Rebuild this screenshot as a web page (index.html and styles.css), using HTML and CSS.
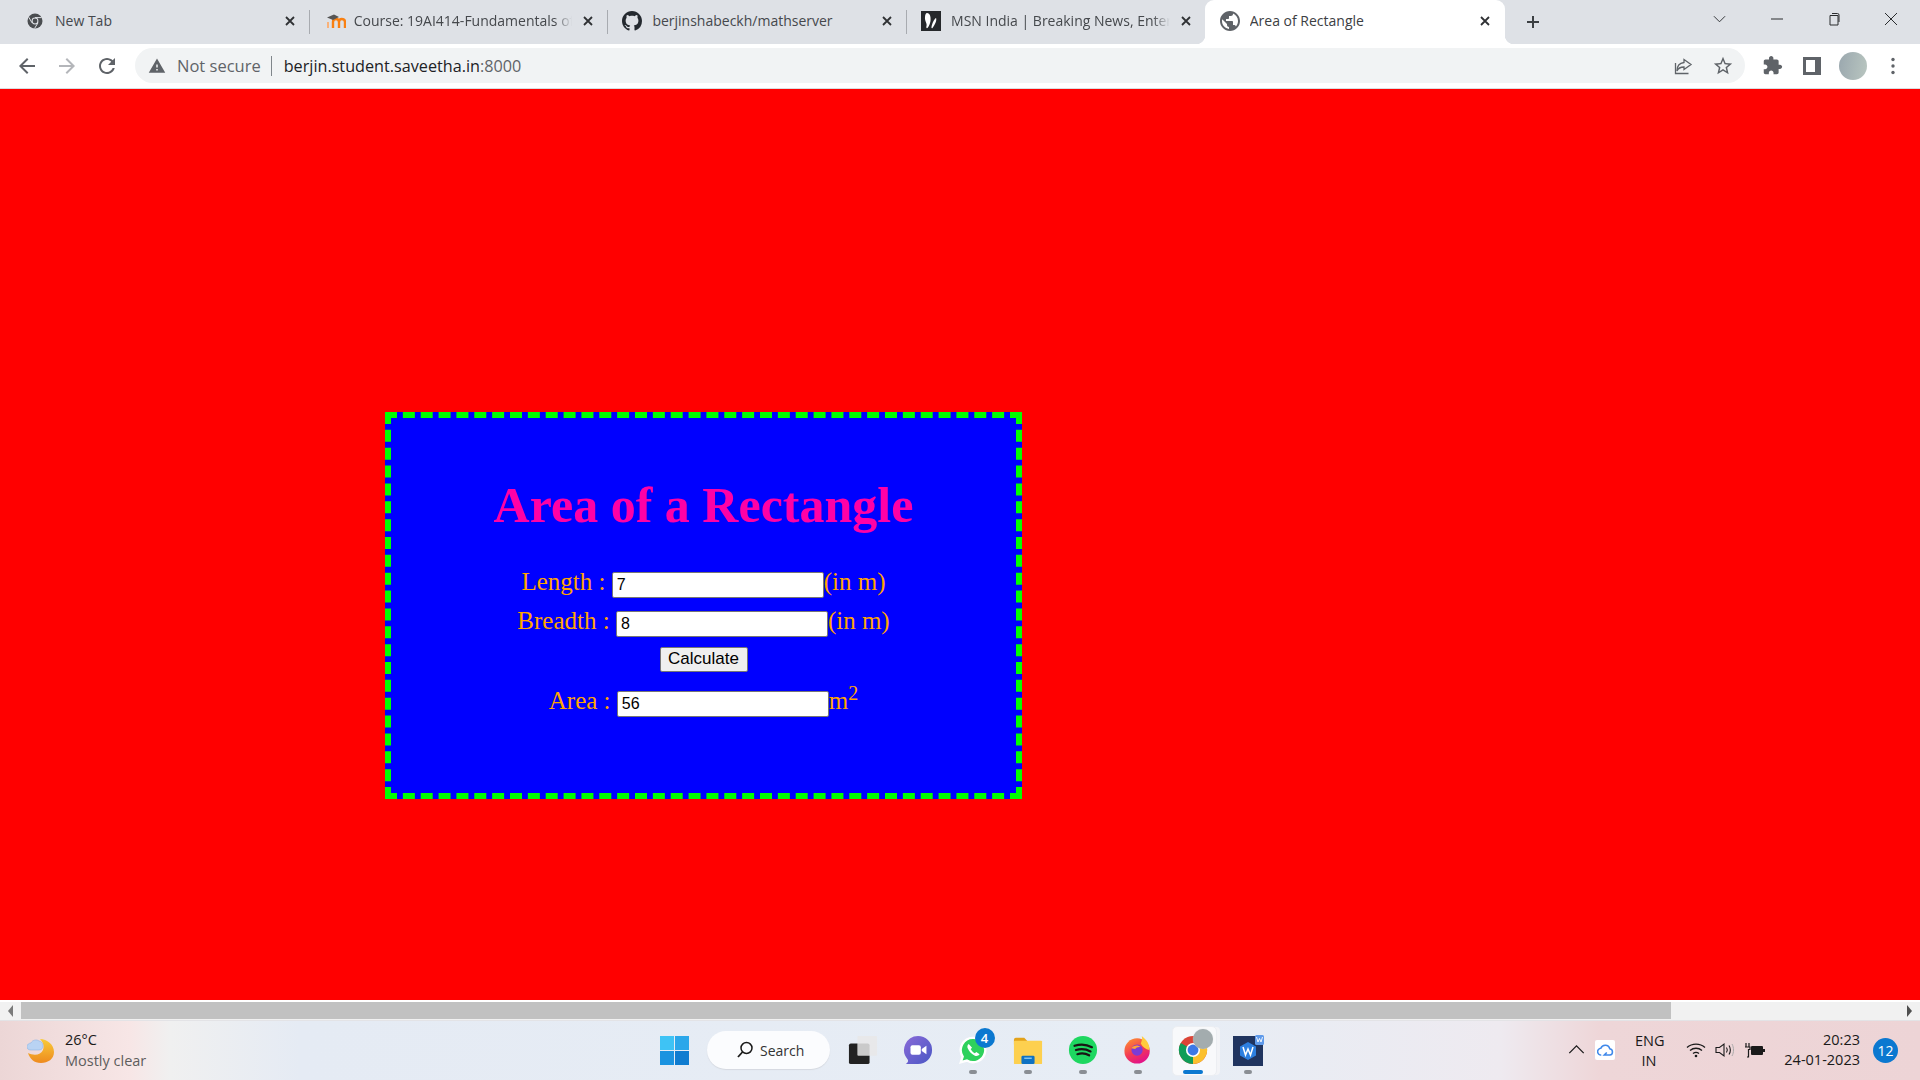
FILE: index.html
```html
<!DOCTYPE html>
<html lang="en">
<head>
<meta charset="utf-8">
<title>Area of Rectangle</title>
<link rel="stylesheet" href="styles.css">
</head>
<body>
<div class="screen">
  <header class="tabstrip">
    <div class="tab">
      <svg class="fav" viewBox="0 0 16 16"><circle cx="8" cy="8" r="7.5" fill="#4a4d50"/><circle cx="8" cy="8" r="3.4" fill="#dee1e6"/><circle cx="8" cy="8" r="2.4" fill="#4a4d50"/><path d="M8 4.6h6.6M5 9.8 1.8 4.2M11 9.8 7.6 15.4" stroke="#dee1e6" stroke-width="1"/></svg>
      <span class="tab-title">New Tab</span>
      <svg class="tab-x" viewBox="0 0 12 12"><path d="M2 2l8 8M10 2l-8 8"/></svg>
    </div>
    <div class="tab sep">
      <svg class="fav wide" viewBox="0 0 20 16"><path d="M7 15V9c0-2 1.500-3 3-3s3 1 3 3v6M13 9c0-2 1.200-3 2.800-3S19 7 19 9v6" fill="none" stroke="#f98012" stroke-width="2.400"/><path d="M2 9v6" stroke="#f9b27a" stroke-width="2"/><path d="M1 4.500 8 1.500 13 4 7 7z" fill="#555"/></svg>
      <span class="tab-title fade">Course: 19AI414-Fundamentals of Data Science</span>
      <svg class="tab-x" viewBox="0 0 12 12"><path d="M2 2l8 8M10 2l-8 8"/></svg>
    </div>
    <div class="tab sep">
      <svg class="fav big" viewBox="0 0 16 16"><path fill="#24292f" d="M8 0C3.58 0 0 3.58 0 8c0 3.54 2.29 6.53 5.47 7.59.4.07.55-.17.55-.38 0-.19-.01-.82-.01-1.49-2.01.37-2.53-.49-2.69-.94-.09-.23-.48-.94-.82-1.13-.28-.15-.68-.52-.01-.53.63-.01 1.08.58 1.23.82.72 1.21 1.87.87 2.33.66.07-.52.28-.87.51-1.07-1.78-.2-3.64-.89-3.64-3.95 0-.87.31-1.59.82-2.15-.08-.2-.36-1.02.08-2.12 0 0 .67-.21 2.2.82.64-.18 1.32-.27 2-.27.68 0 1.36.09 2 .27 1.53-1.04 2.2-.82 2.2-.82.44 1.1.16 1.92.08 2.12.51.56.82 1.27.82 2.15 0 3.07-1.87 3.75-3.65 3.95.29.25.54.73.54 1.48 0 1.07-.01 1.93-.01 2.2 0 .21.15.46.55.38A8.013 8.013 0 0016 8c0-4.42-3.58-8-8-8z"/></svg>
      <span class="tab-title">berjinshabeckh/mathserver</span>
      <svg class="tab-x" viewBox="0 0 12 12"><path d="M2 2l8 8M10 2l-8 8"/></svg>
    </div>
    <div class="tab sep">
      <svg class="fav big" viewBox="0 0 20 20"><rect width="20" height="20" fill="#26282b"/><path d="M6 2c3 0 4 4 3.500 8-.3 2.500-1.500 5-3 7-1 .5-1.500-.5-1-2 .8-2.500-2-5-1.500-9C4.200 3.500 5 2 6 2zM15 7c1 2-.5 6-3.500 10-.8.5-1.200 0-1-1 .5-3 2.500-8 4.500-9z" fill="#fff"/></svg>
      <span class="tab-title fade">MSN India | Breaking News, Entertainment</span>
      <svg class="tab-x" viewBox="0 0 12 12"><path d="M2 2l8 8M10 2l-8 8"/></svg>
    </div>
    <div class="tab tab-active">
      <svg class="fav big" viewBox="2 2 20 20"><path fill="#5f6368" d="M12 2C6.480 2 2 6.480 2 12s4.480 10 10 10 10-4.480 10-10S17.520 2 12 2zm-1 17.930c-3.950-.49-7-3.850-7-7.930 0-.62.080-1.210.210-1.790L9 15v1c0 1.100.9 2 2 2v1.930zm6.900-2.540c-.26-.81-1-1.390-1.900-1.390h-1v-3c0-.55-.45-1-1-1H8v-2h2c.55 0 1-.45 1-1V7h2c1.100 0 2-.9 2-2v-.41c2.930 1.190 5 4.060 5 7.410 0 2.080-.8 3.970-2.100 5.390z"/></svg>
      <span class="tab-title">Area of Rectangle</span>
      <svg class="tab-x" viewBox="0 0 12 12"><path d="M2 2l8 8M10 2l-8 8"/></svg>
    </div>
    <svg class="newtab" viewBox="0 0 16 16"><path d="M8 2v12M2 8h12"/></svg>
    <div class="winctl">
      <svg class="chev" viewBox="0 0 14 8"><path d="M1 1l6 6 6-6"/></svg>
      <svg class="wc" viewBox="0 0 14 14"><path d="M1 7h12"/></svg>
      <svg class="wc" viewBox="0 0 14 14"><path d="M3 3.500h8v9.500H3zM5 1.500h5.500a1.500 1.500 0 0 1 1.500 1.500v7"/></svg>
      <svg class="wc" viewBox="0 0 14 14"><path d="M1 1l12 12M13 1L1 13"/></svg>
    </div>
  </header>

  <nav class="toolbar">
    <svg class="tb first" viewBox="0 0 24 24"><path d="M20 11H7.830l5.590-5.590L12 4l-8 8 8 8 1.410-1.410L7.830 13H20v-2z"/></svg>
    <svg class="tb dim" viewBox="0 0 24 24"><path d="M4 11h12.170l-5.590-5.590L12 4l8 8-8 8-1.410-1.410L16.170 13H4v-2z"/></svg>
    <svg class="tb" viewBox="0 0 24 24"><path d="M17.650 6.350C16.200 4.900 14.210 4 12 4c-4.420 0-7.990 3.580-7.990 8s3.570 8 7.990 8c3.730 0 6.840-2.550 7.730-6h-2.080c-.82 2.330-3.040 4-5.650 4-3.310 0-6-2.690-6-6s2.690-6 6-6c1.660 0 3.140.69 4.220 1.780L13 11h7V4l-2.350 2.350z"/></svg>
    <div class="omnibox">
      <svg class="warn" viewBox="0 0 24 24"><path d="M1 21h22L12 2 1 21zm12-3h-2v-2h2v2zm0-4h-2v-4h2v4z"/></svg>
      <span class="insecure">Not secure</span>
      <span class="omni-sep"></span>
      <span class="url">berjin.student.saveetha.in<span class="port">:8000</span></span>
      <span class="spacer"></span>
      <svg class="omni-ic" viewBox="0 0 20 20"><path d="M11 3.500 18 8.500l-7 5V11C7 11 5 12.500 4 15c0-4.500 2.500-8 7-8.500zM2.500 7v10.500h13" fill="none" stroke="#5f6368" stroke-width="1.300"/></svg>
      <svg class="omni-ic star" viewBox="0 0 24 24"><path d="M22 9.240l-7.190-.62L12 2 9.190 8.630 2 9.240l5.460 4.730L5.820 21 12 17.270 18.180 21l-1.630-7.030L22 9.240zM12 15.400l-3.760 2.270 1-4.280-3.320-2.880 4.380-.38L12 6.100l1.710 4.040 4.380.38-3.320 2.880 1 4.280L12 15.400z"/></svg>
    </div>
    <svg class="act ext" viewBox="0 0 24 24"><path d="M20.500 11H19V7c0-1.100-.9-2-2-2h-4V3.500C13 2.120 11.880 1 10.500 1S8 2.120 8 3.500V5H4c-1.100 0-1.990.9-1.990 2v3.800H3.500c1.490 0 2.700 1.210 2.700 2.700s-1.210 2.700-2.700 2.700H2V20c0 1.100.9 2 2 2h3.800v-1.500c0-1.490 1.210-2.700 2.700-2.700 1.490 0 2.700 1.210 2.700 2.700V22H17c1.100 0 2-.9 2-2v-4h1.500c1.380 0 2.500-1.120 2.500-2.500S21.880 11 20.500 11z"/></svg>
    <svg class="act panel" viewBox="0 0 18 18"><path fill-rule="evenodd" d="M0 0h18v18H0zM3 3v12h9V3z"/></svg>
    <span class="avatar"></span>
    <svg class="act menu" viewBox="0 0 4 18"><circle cx="2" cy="2.500" r="1.700"/><circle cx="2" cy="9" r="1.700"/><circle cx="2" cy="15.500" r="1.700"/></svg>
  </nav>

  <main class="page">
    <section class="card">
      <h1 class="card-title">Area of a Rectangle</h1>
      <form class="calc">
        <div class="line">Length : <input class="num" type="text" value="7">(in m)</div>
        <div class="line">Breadth : <input class="num" type="text" value="8">(in m)</div>
        <div class="line-btn"><button class="calc-btn" type="button">Calculate</button></div>
        <div class="line">Area : <input class="num" type="text" value="56">m<sup class="sq">2</sup></div>
      </form>
    </section>
  </main>

  <div class="hscroll">
    <button class="sb-arrow" type="button"><span class="tri-l"></span></button>
    <div class="sb-track"><div class="sb-thumb"></div></div>
    <button class="sb-arrow" type="button"><span class="tri-r"></span></button>
  </div>

  <footer class="taskbar">
    <div class="weather">
      <svg class="wx" viewBox="0 0 28 28"><path d="M13 3c7 .5 14 5 14 13 0 7-6 11-13 11C7 27 3 23 1 17c6 3 13 2 15-3 1.500-4 0-8-3-11z" fill="url(#moon)"/><path d="M4 14c-3 0-4-1.500-4-3.500S2 7 4 7c1-3 6-4 8-2 2 0 4 2 4 4.500 0 2.500-1 4.500-4 4.500z" fill="#b9d3f3" stroke="#8fb5e6" stroke-width=".6"/><defs><linearGradient id="moon" x1="0" y1="0" x2="0" y2="1"><stop offset="0" stop-color="#f8cb3a"/><stop offset="1" stop-color="#ee8a1e"/></linearGradient></defs></svg>
      <div class="wx-text"><div class="wx-temp">26°C</div><div class="wx-desc">Mostly clear</div></div>
    </div>

    <div class="dock">
      <svg class="win" viewBox="0 0 29 29"><rect width="14" height="14" fill="#3ec3f5"/><rect x="15" width="14" height="14" fill="#2ba7ea"/><rect y="15" width="14" height="14" fill="#1b93e0"/><rect x="15" y="15" width="14" height="14" fill="#0f7cd0"/></svg>
      <div class="search">
        <svg class="search-ic" viewBox="0 0 18 18"><circle cx="10.500" cy="7" r="5.500" fill="none" stroke="#1a1a1a" stroke-width="1.500"/><path d="M6.500 11 2 16" stroke="#1a1a1a" stroke-width="1.800"/></svg>
        <span>Search</span>
      </div>
      <div class="app"><svg viewBox="0 0 32 32" class="ic"><rect x="1" y="9" width="22" height="22" rx="2" fill="#222"/><rect x="10" y="1" width="21" height="21" rx="1" fill="#e8e8e8" fill-opacity=".85"/></svg></div>
      <div class="app"><svg viewBox="0 0 32 32" class="ic"><path d="M16 1a15 15 0 0 1 0 30H3c2-1 3-3 2-5A15 15 0 0 1 16 1z" fill="url(#chat)"/><rect x="8" y="11" width="11" height="10" rx="2" fill="#fff"/><path d="M20 15l5-3.500v9L20 17z" fill="#fff"/><defs><linearGradient id="chat" x1="0" y1="0" x2="1" y2="1"><stop offset="0" stop-color="#8a6ad8"/><stop offset="1" stop-color="#4a57c4"/></linearGradient></defs></svg></div>
      <div class="app dot">
        <svg viewBox="0 0 32 32" class="ic"><path d="M16 3a13 13 0 0 0-11 20L3 29l6.500-1.800A13 13 0 1 0 16 3z" fill="#2ed15c" stroke="#fff" stroke-width="2.500"/><path d="M11.500 9.500c-1.500 1-2 3-1 5 1.500 3.500 4 6 7.500 7.500 2 .8 4 0 5-1.500l-3.500-2.500-1.500 1.500c-2-1-3.500-2.500-4.500-4.500l1.500-1.500z" fill="#fff"/></svg>
        <span class="badge">4</span>
      </div>
      <div class="app dot"><svg viewBox="0 0 32 32" class="ic"><path d="M1 5a2 2 0 0 1 2-2h9l3 3v4H1z" fill="#e3a21a"/><rect x="1" y="6" width="30" height="25" rx="1" fill="#fdd04f"/><rect x="9" y="22" width="14" height="9" rx="1.500" fill="#0f72c2"/><rect x="12" y="24" width="8" height="1.600" fill="#7fc2ee"/></svg></div>
      <div class="app dot"><svg viewBox="0 0 32 32" class="ic"><circle cx="16" cy="16" r="15" fill="#1ed760"/><path d="M7 11.500c6-2 13-1.500 18.500 1.500M8.500 16c5-1.500 11-1 15.500 1.500M10 20.500c4-1.200 9-.8 12.500 1.200" fill="none" stroke="#191414" stroke-width="2.400" stroke-linecap="round"/></svg></div>
      <div class="app dot"><svg viewBox="0 0 32 32" class="ic"><circle cx="15" cy="17" r="13.500" fill="url(#ff)"/><path d="M20 1c5 4 9 9 8 15-4-1-7-3-9-7 1-3 2-5 1-8z" fill="#ffcb3d"/><circle cx="15" cy="16" r="6" fill="#7b3bd6"/><path d="M9 14c2-3 7-4 10-1-3-.5-5 .5-6 2z" fill="#ffa436"/><defs><linearGradient id="ff" x1="0" y1="0" x2=".5" y2="1"><stop offset="0" stop-color="#ff9a2e"/><stop offset=".6" stop-color="#f33b53"/><stop offset="1" stop-color="#e31587"/></linearGradient></defs></svg></div>
      <div class="app current">
        <svg viewBox="0 0 32 32" class="ic"><circle cx="16" cy="16" r="15" fill="#db4437"/><path d="M16 16 3 8.500A15 15 0 0 0 16 31z" fill="#0f9d58"/><path d="M16 16V31A15 15 0 0 0 29 8.500z" fill="#fbc02d"/><circle cx="16" cy="16" r="7.500" fill="#fff"/><circle cx="16" cy="16" r="5.800" fill="#3b78e7"/></svg>
        <span class="grey-dot"></span>
      </div>
      <div class="app dot"><svg viewBox="0 0 31 33" class="ic word"><rect y="3" width="30" height="30" fill="#20345f"/><path d="M15 9l8 4.500v9L15 27l-8-4.500v-9z" fill="#2d7fe0"/><path d="M10 14l2.500 8 2.500-6 2.500 6 2.500-8" fill="none" stroke="#fff" stroke-width="1.500"/><rect x="22" y="2" width="9" height="10" rx="1.500" fill="#5f9aea"/><path d="M23.500 4l1.500 5 1.500-3.500L28 9l1.500-5" fill="none" stroke="#fff" stroke-width=".9"/></svg></div>
    </div>

    <div class="tray">
      <svg class="caret" viewBox="0 0 18 10"><path d="M1 9l8-8 8 8"/></svg>
      <span class="cloud"><svg viewBox="0 0 20 16"><path d="M5 14a4 4 0 0 1-.5-8A5.500 5.500 0 0 1 15 6.500 3.800 3.800 0 0 1 15 14H8.500l3-3" fill="none" stroke="#3f88ea" stroke-width="1.800"/></svg></span>
      <div class="lang"><div>ENG</div><div>IN</div></div>
      <svg class="sys wifi" viewBox="0 0 20 16"><path d="M1 5.500c5-4.600 13-4.600 18 0M4 8.500c3.500-3 8.500-3 12 0M7 11.500c1.800-1.400 4.200-1.400 6 0" fill="none" stroke="#1a1a1a" stroke-width="1.300"/><circle cx="10" cy="14" r="1.300" fill="#1a1a1a"/></svg>
      <svg class="sys vol" viewBox="0 0 20 16"><path d="M1 5.500h3.500L9 2v12L4.500 10.500H1z" fill="none" stroke="#1a1a1a" stroke-width="1.100"/><path d="M11.500 5.500c1 1.500 1 3.500 0 5M14 3.500c1.800 2.500 1.800 6.500 0 9" fill="none" stroke="#1a1a1a" stroke-width="1.100"/><path d="M17 2c2 3.500 2 8.500 0 12" fill="none" stroke="#aaa" stroke-width="1"/></svg>
      <svg class="sys batt" viewBox="0 0 20 16"><path d="M1 1v4M4 1v4M0 5h5v2.500H3.500V15H2" fill="none" stroke="#1a1a1a" stroke-width="1.200"/><rect x="6" y="4" width="12" height="9" rx="1" fill="#1a1a1a"/><rect x="18" y="7" width="2" height="3" fill="#1a1a1a"/></svg>
      <div class="clock"><div>20:23</div><div>24-01-2023</div></div>
      <span class="notif">12</span>
    </div>
  </footer>
</div>
</body>
</html>
```
FILE: styles.css
```css
* { box-sizing: border-box; }
html, body { margin: 0; padding: 0; height: 100%; overflow: hidden; }
.screen { width: 1920px; height: 1080px; display: flex; flex-direction: column; font-family: "Open Sans", "Noto Sans", sans-serif; }

/* tab strip */
.tabstrip { height: 44px; flex: none; background: #dee1e6; display: flex; align-items: stretch; padding-left: 10px; }
.tab { width: 298.7px; flex: none; display: flex; align-items: center; padding: 0 13px 3px 17px; position: relative; color: #45484c; font-size: 14px; }
.tab.sep::before { content: ""; position: absolute; left: 0; top: 10px; height: 24px; width: 1px; background: #a8abb0; }
.tab-active { width: 300px; background: #fff; border-radius: 9px 9px 0 0; color: #3c4043; padding-right: 14px; }
.tab-active::before, .tab-active::after { content: ""; position: absolute; bottom: 0; width: 9px; height: 9px; }
.tab-active::before { left: -9px; background: radial-gradient(circle at 0 0, transparent 9px, #fff 9.500px); }
.tab-active::after { right: -9px; background: radial-gradient(circle at 100% 0, transparent 9px, #fff 9.500px); }
.fav { width: 16px; height: 16px; flex: none; margin-right: 12px; }
.fav.wide { width: 20px; margin-right: 8px; }
.fav.big { width: 20px; height: 20px; margin-left: -2px; margin-right: 10px; }
.tab-title { flex: 1; min-width: 0; white-space: nowrap; overflow: hidden; }
.tab-title.fade { -webkit-mask-image: linear-gradient(to right, #000 92%, transparent 100%); mask-image: linear-gradient(to right, #000 92%, transparent 100%); margin-right: 2px; }
.tab-x { width: 12px; height: 12px; flex: none; margin-left: 8px; }
.tab-x path { stroke: #2f3134; stroke-width: 1.800; fill: none; }
.newtab { width: 16px; height: 16px; flex: none; align-self: center; margin-left: 20px; margin-bottom: 1px; }
.newtab path { stroke: #3c4043; stroke-width: 2; fill: none; }
.winctl { flex: 1; display: flex; align-items: center; justify-content: flex-end; padding: 0 22px 6px 0; }
.chev { width: 13px; height: 8px; margin-right: 1px; }
.chev path, .wc path { stroke: #2a2c2e; stroke-width: 1; fill: none; }
.wc { width: 14px; height: 14px; margin-left: 43px; }

/* toolbar */
.toolbar { height: 45px; flex: none; background: #fff; border-bottom: 1px solid #dadce0; display: flex; align-items: center; padding: 0 17px 1px 15px; }
.tb { width: 24px; height: 24px; fill: #5f6368; flex: none; margin-right: 16px; }
.tb.dim { fill: #b4b6ba; }
.omnibox { width: 1610px; height: 35px; background: #f1f3f4; border-radius: 18px; display: flex; align-items: center; padding: 0 11px 0 13px; flex: none; }
.warn { width: 18px; height: 18px; fill: #5f6368; flex: none; }
.insecure { margin-left: 11px; color: #5f6368; font-size: 16.5px; }
.omni-sep { width: 1px; height: 20px; background: #80868b; margin: 0 12px 0 10px; }
.url { color: #202124; font-size: 16.2px; white-space: nowrap; }
.port { color: #5f6368; }
.spacer { flex: 1; }
.omni-ic { width: 20px; height: 20px; flex: none; }
.omni-ic.star { fill: #5f6368; width: 22px; height: 22px; margin-left: 19px; }
.act { flex: none; fill: #5f6368; }
.ext { width: 21px; height: 21px; margin-left: 17px; }
.panel { width: 18px; height: 18px; margin-left: 20px; }
.avatar { width: 28px; height: 28px; border-radius: 50%; flex: none; margin-left: 18px; background: linear-gradient(100deg, #9aa7ae, #b9c6c0); }
.menu { width: 4px; height: 18px; margin-left: 24px; }

/* page */
.page { flex: 1; min-height: 0; background: #f00; padding: 323px 0 0 385px; }
.card { width: 637px; height: 387px; background: #00f; border: 6px dashed #0f0; text-align: center; font-family: "Liberation Serif", serif; color: #ffa500; font-size: 25px; }
.card-title { margin: 58px 0 29px; font-size: 50px; line-height: 58px; font-weight: 700; color: #ff00a6; }
.line { height: 39px; line-height: 37px; white-space: nowrap; }
.num { width: 212px; height: 26px; padding: 1px 3px 1px 4px; font: 16px "Liberation Sans", sans-serif; color: #000; background: #fff; border: 1px solid #767676; border-radius: 2px; vertical-align: baseline; }
.line-btn { height: 41px; padding-top: 1px; }
.calc-btn { width: 88px; height: 25px; padding: 0; font: 17px "Liberation Sans", sans-serif; color: #000; background: #efefef; border: 1px solid #767676; border-radius: 2px; }
.sq { font-size: 20px; line-height: 0; }

/* scrollbar */
.hscroll { height: 20px; flex: none; background: #f1f1f1; border-top: 2px solid #fff; padding-bottom: 1px; display: flex; }
.sb-arrow { width: 21px; flex: none; padding: 0; border: 0; background: #f1f1f1; display: flex; align-items: center; justify-content: center; }
.sb-track { flex: 1; background: #f1f1f1; }
.sb-thumb { width: 1650px; height: 100%; background: #c1c1c1; }
.tri-l { border: 5px solid transparent; border-left-width: 0; border-right: 5px solid #7a7a7a; border-top-width: 6px; border-bottom-width: 6px; }
.tri-r { border: 5px solid transparent; border-right-width: 0; border-left: 5px solid #4f4f4f; border-top-width: 6px; border-bottom-width: 6px; }

/* taskbar */
.taskbar { height: 60px; flex: none; display: flex; align-items: center; position: relative; color: #1a1a1a; background: linear-gradient(90deg, #ecd6d6 0, #f7e6e6 130px, #f0f0f0 170px, #e5ebf4 300px, #e7edf5 1200px, #eeeaf0 1500px, #eed6d8 1600px, #edd4d6 100%); border-top: 1px solid #e3e3e6; }
.weather { width: 640px; flex: none; display: flex; align-items: center; padding: 0 0 2px 27px; }
.wx { width: 28px; height: 28px; flex: none; }
.wx-text { margin-left: 10px; font-size: 14.5px; line-height: 21px; }
.wx-desc { color: #5d5d5d; }
.dock { width: 640px; flex: none; display: flex; align-items: center; padding-left: 20px; margin-bottom: 1px; }
.win { width: 29px; height: 29px; flex: none; }
.search { width: 123px; height: 38px; margin-left: 18px; border-radius: 19px; background: #fbfcfe; display: flex; align-items: center; padding-left: 29px; font-size: 14px; color: #333; flex: none; box-shadow: 0 1px 1px #d5d9e0; }
.search-ic { width: 18px; height: 18px; margin-right: 6px; }
.app { width: 55px; height: 48px; flex: none; display: flex; align-items: center; justify-content: center; position: relative; }
.search + .app { margin-left: 5px; }
.ic { width: 30px; height: 30px; }
.ic.word { width: 31px; height: 33px; margin-top: -2px; margin-left: 1px; }
.dot::after, .grey-dot { content: ""; position: absolute; left: 50%; margin-left: -4px; bottom: 0; width: 8px; height: 4px; border-radius: 2px; background: #8a8e94; }
.current::before { content: ""; position: absolute; left: 7px; top: 0; width: 43px; height: 48px; border-radius: 5px; background: #f8f9fb; border: 1px solid #eceef2; box-shadow: 4px 0 0 -1px #f3f4f7; }
.current .ic { position: relative; }
.grey-dot { display: block; background: #0b78d0; width: 20px; margin-left: -10px; }
.current::after { content: ""; position: absolute; right: 7px; top: 3px; width: 20px; height: 20px; border-radius: 50%; background: #a3acae; box-shadow: 0 0 1px #c9cfd1; }
.badge { position: absolute; left: 29.5px; top: 1.5px; width: 20px; height: 20px; border-radius: 50%; background: #0b78d0; color: #fff; font-size: 13px; font-weight: 600; text-align: center; line-height: 20px; }
.tray { flex: 1; display: flex; align-items: center; padding-left: 288px; font-size: 14.5px; padding-bottom: 2px; }
.caret { width: 17px; height: 9px; flex: none; }
.caret path { fill: none; stroke: #1a1a1a; stroke-width: 1.400; }
.cloud { width: 20px; height: 20px; background: #fff; border-radius: 2px; margin-left: 10px; flex: none; display: flex; align-items: center; justify-content: center; }
.cloud svg { width: 17px; height: 14px; }
.lang { margin: 2px 0 0 20px; width: 28px; text-align: center; line-height: 20px; }
.sys { width: 20px; height: 16px; flex: none; }
.wifi { margin-left: 23px; }
.vol { margin-left: 9px; }
.batt { margin-left: 10px; }
.clock { width: 90px; margin-left: 5px; text-align: right; line-height: 20px; }
.notif { width: 25px; height: 25px; border-radius: 50%; background: #0b78d0; color: #fff; text-align: center; font-size: 14px; line-height: 25px; margin: 2px 0 0 13px; flex: none; }
```
